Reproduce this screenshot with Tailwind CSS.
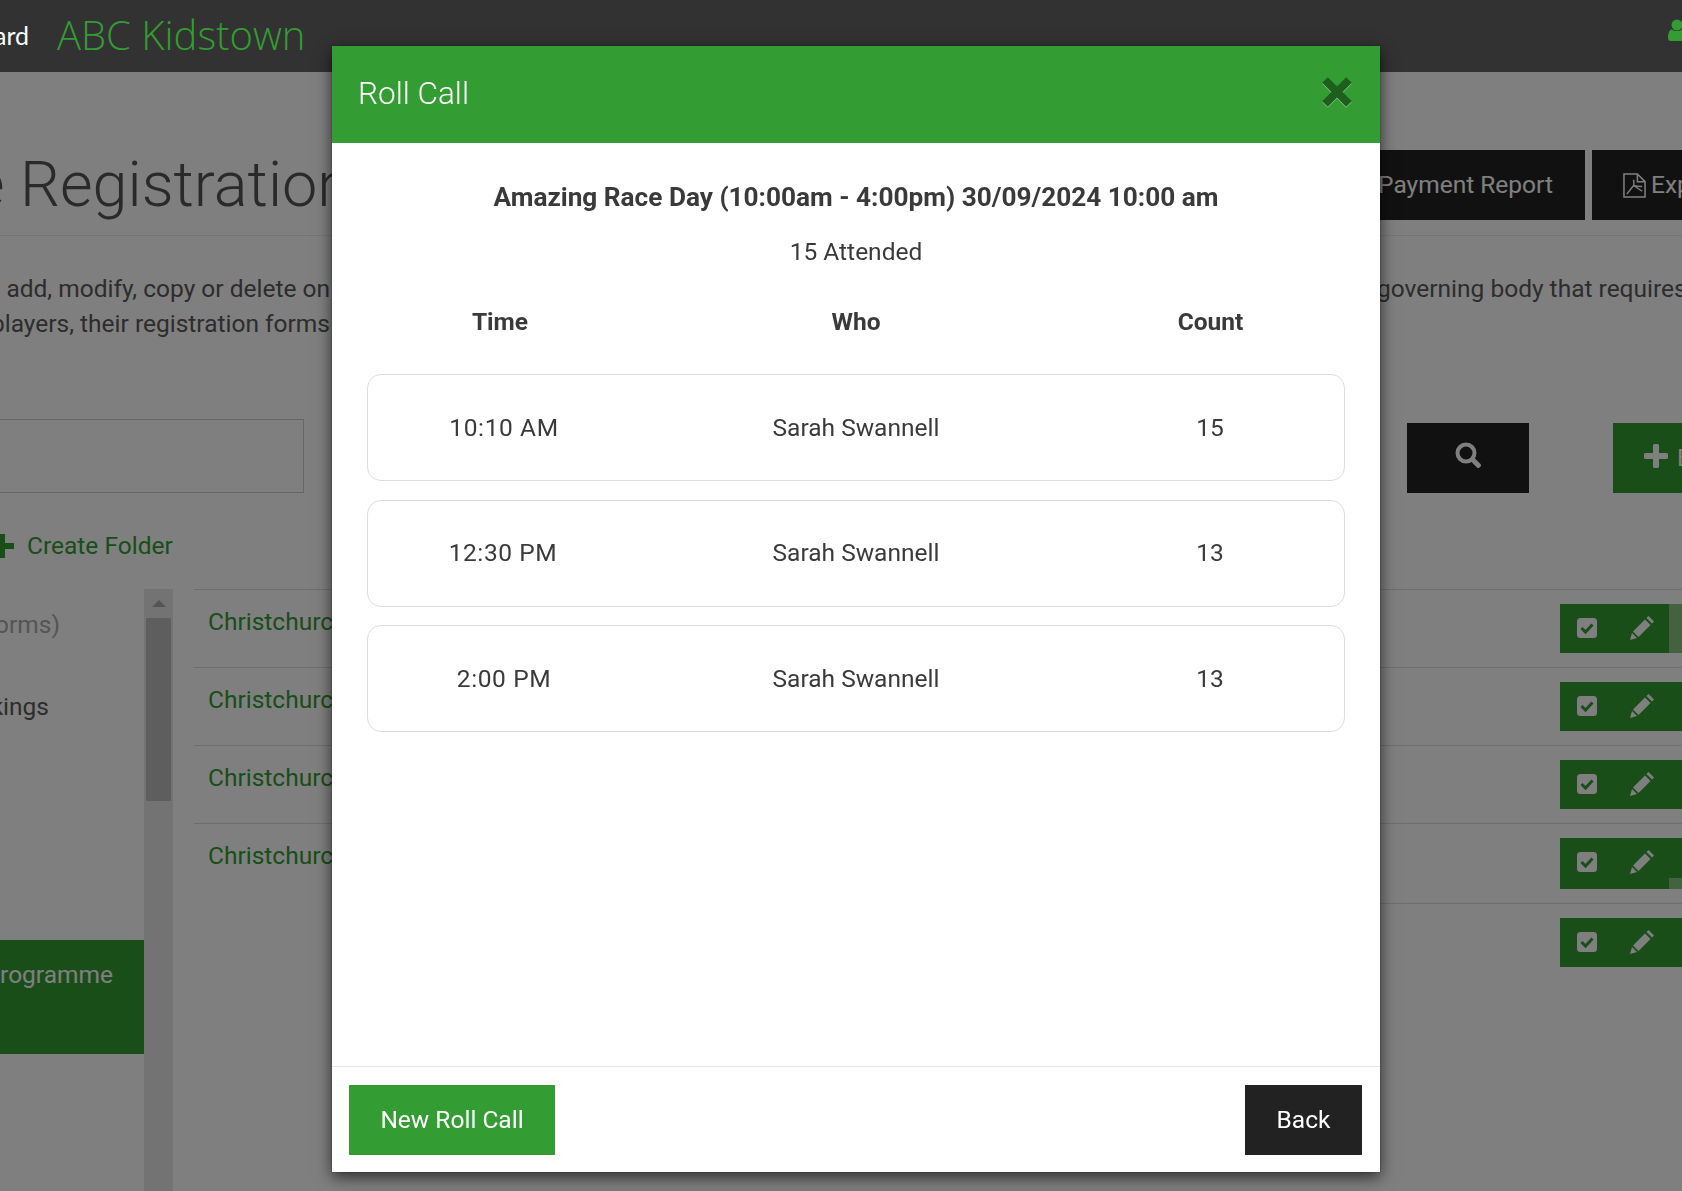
<!DOCTYPE html>
<html lang="en">
<head>
    <meta charset="UTF-8">
    <title>Roll Call - ABC Kidstown</title>
    <script src="https://cdn.jsdelivr.net/npm/@tailwindcss/browser@4"></script>
</head>
<body class="bg-white font-['Roboto',sans-serif] text-[24.5px] text-[#5a5a5a]">

<div class="w-[1682px] h-[1191px] overflow-hidden">
    <!-- top bar stays above the backdrop -->
    <header class="relative z-20 h-[72px] bg-[#323232] flex items-center justify-between">
        <div class="flex items-center">
            <div class="w-[29px] flex justify-end">
                <span class="shrink-0 text-white text-[25px] font-['Lato',sans-serif]">Dashboard</span>
            </div>
            <a href="#" class="ml-[28px] -mt-[2px] text-[#339c33] text-[40px] font-light font-['Open_Sans',sans-serif]">ABC Kidstown</a>
        </div>
        <svg class="w-[22px] h-[22px] shrink-0 -mt-[12px] mr-[-8px] text-[#339c33]" viewBox="0 0 22 22" fill="currentColor"><circle cx="9" cy="6" r="5.5"/><path d="M0 19c0-6 2-8.500 4-8.500 1.500 1 3 1.500 5 1.500s3.500-.5 5-1.500c2 0 4 2.500 4 8.500 0 2-1 3-3 3H3c-2 0-3-1-3-3z"/></svg>
    </header>

    <!-- page title -->
    <div class="h-[164px] border-b border-[#e8e8e8] flex items-start">
        <div class="w-[352px] flex justify-end shrink-0 mt-[73px]">
            <h1 class="shrink-0 text-[63px] font-light leading-[80px] text-[#555]">Programme Registration</h1>
        </div>
        <div class="ml-[928px] mt-[78px] w-[305px] h-[70px] pt-[1px] bg-[#222] text-white flex items-center justify-end pr-[32px] shrink-0">Payment Report</div>
        <div class="ml-[7px] mt-[78px] w-[200px] h-[70px] bg-[#222] text-white flex items-center pl-[31px] shrink-0">
            <svg class="w-[23px] h-[25px] mr-[5px] shrink-0" viewBox="0 0 24 26" fill="none" stroke="currentColor" stroke-width="1.600"><path d="M1 1h14l8 8v16H1z"/><path d="M15 1v8h8"/><path d="M4 22l7-9c1-2 0-4 0-6M11 13l9 6M11 13c3 1 6 1 9 1" stroke-width="1.500"/></svg>
            Export
        </div>
    </div>

    <!-- intro text -->
    <div class="mt-[35px] flex h-[35px] leading-[35px] justify-between">
        <div class="w-[330px] flex justify-end shrink-0"><span class="shrink-0">Use this page to add, modify, copy or delete on</span></div>
        <span class="shrink-0 ml-[1047px]">governing body that requires</span>
    </div>
    <div class="flex h-[35px] leading-[35px]">
        <div class="w-[330px] flex justify-end shrink-0"><span class="shrink-0">players, their registration forms</span></div>
    </div>

    <!-- search row -->
    <div class="mt-[78px] flex items-end">
        <div class="-ml-[20px] w-[324px] h-[74px] border border-[#ccc] shrink-0"></div>
        <div class="ml-[1103px] w-[122px] h-[70px] bg-[#222] text-white flex items-center justify-center shrink-0">
            <svg class="w-[26px] h-[26px] -mt-[6px]" viewBox="0 0 26 26" fill="none" stroke="currentColor"><circle cx="11" cy="11" r="8.500" stroke-width="4"/><path d="M17 17l8 8" stroke-width="5"/></svg>
        </div>
        <div class="ml-[84px] w-[200px] h-[70px] bg-[#339c33] text-white flex items-center pl-[31px] shrink-0">
            <svg class="w-[24px] h-[24px] mr-[9px] -mt-[4px] shrink-0" viewBox="0 0 24 24" fill="currentColor"><path d="M9 1.500c0-.8.700-1.500 1.500-1.500h3c.8 0 1.500.7 1.500 1.500V9h7.500c.8 0 1.500.7 1.500 1.500v3c0 .8-.7 1.500-1.500 1.500H15v7.500c0 .8-.7 1.500-1.500 1.500h-3c-.8 0-1.500-.7-1.500-1.500V15H1.500C.7 15 0 14.300 0 13.500v-3C0 9.700.7 9 1.500 9H9z"/></svg>
            Enrol
        </div>
    </div>

    <!-- create folder -->
    <div class="mt-[38px] h-[30px] flex items-center text-[#339c33]">
        <svg class="w-[14px] h-[24px] shrink-0" viewBox="10 0 14 24" fill="currentColor"><path d="M9 0h6v9h9v6h-9v9H9v-9H0V9h9z"/></svg>
        <span class="ml-[13px]">Create Folder</span>
    </div>

    <div class="mt-[28px] flex h-[602px]">
        <!-- folder list -->
        <div class="w-[144px] shrink-0 relative">
            <div class="mt-[20px] w-[60px] flex justify-end leading-[32px] text-[#aaa]"><span class="shrink-0">Programmes (No forms)</span></div>
            <div class="mt-[50px] w-[49px] flex justify-end leading-[32px]"><span class="shrink-0">Bookings</span></div>
            <div class="mt-[217px] h-[114px] bg-[#339c33] text-white flex justify-end pr-[31px] pt-[19px] leading-[32px]"><span class="shrink-0">Programme</span></div>
        </div>
        <!-- scrollbar -->
        <div class="w-[29px] shrink-0 bg-[#e6e6e6] flex flex-col items-center">
            <div class="h-[29px] flex items-center justify-center">
                <div class="w-0 h-0 border-x-[7px] border-x-transparent border-b-[7px] border-b-[#aaa]"></div>
            </div>
            <div class="w-[25px] h-[183px] bg-[#bdbdbd]"></div>
        </div>
        <!-- programme rows -->
        <div class="ml-[21px] flex-1 text-[#339c33]">
            <div class="h-[78px] border-t border-[#ddd] flex pl-[14px]">
                <span class="pt-[16px] leading-[32px]">Christchurch Programme</span>
                <div class="ml-auto mt-[14px] w-[122px] h-[49px] bg-[#339c33] text-white flex">
                    <svg class="ml-[17px] mt-[14px] w-[20px] h-[20px] shrink-0" viewBox="0 0 20 20"><rect width="20" height="20" rx="3.500" fill="currentColor"/><path d="M4.500 10l4 4 7-7.500" fill="none" stroke="#339c33" stroke-width="3"/></svg>
                    <svg class="ml-[33px] mt-[12px] w-[24px] h-[24px] shrink-0" viewBox="0 0 24 24" fill="currentColor"><path d="M0 24l2-7 5 5z"/><path d="M3 15.500l12-12 5.500 5.500-12 12z"/><path d="M16.500 2l2-2L24 5.500l-2 2z"/></svg>
                    <div class="ml-auto w-[13px] bg-[#88c480]"></div>
                </div>
            </div>
            <div class="h-[78px] border-t border-[#ddd] flex pl-[14px]">
                <span class="pt-[16px] leading-[32px]">Christchurch Programme</span>
                <div class="ml-auto mt-[14px] w-[122px] h-[49px] bg-[#339c33] text-white flex">
                    <svg class="ml-[17px] mt-[14px] w-[20px] h-[20px] shrink-0" viewBox="0 0 20 20"><rect width="20" height="20" rx="3.500" fill="currentColor"/><path d="M4.500 10l4 4 7-7.500" fill="none" stroke="#339c33" stroke-width="3"/></svg>
                    <svg class="ml-[33px] mt-[12px] w-[24px] h-[24px] shrink-0" viewBox="0 0 24 24" fill="currentColor"><path d="M0 24l2-7 5 5z"/><path d="M3 15.500l12-12 5.500 5.500-12 12z"/><path d="M16.500 2l2-2L24 5.500l-2 2z"/></svg>
                </div>
            </div>
            <div class="h-[78px] border-t border-[#ddd] flex pl-[14px]">
                <span class="pt-[16px] leading-[32px]">Christchurch Programme</span>
                <div class="ml-auto mt-[14px] w-[122px] h-[49px] bg-[#339c33] text-white flex">
                    <svg class="ml-[17px] mt-[14px] w-[20px] h-[20px] shrink-0" viewBox="0 0 20 20"><rect width="20" height="20" rx="3.500" fill="currentColor"/><path d="M4.500 10l4 4 7-7.500" fill="none" stroke="#339c33" stroke-width="3"/></svg>
                    <svg class="ml-[33px] mt-[12px] w-[24px] h-[24px] shrink-0" viewBox="0 0 24 24" fill="currentColor"><path d="M0 24l2-7 5 5z"/><path d="M3 15.500l12-12 5.500 5.500-12 12z"/><path d="M16.500 2l2-2L24 5.500l-2 2z"/></svg>
                </div>
            </div>
            <div class="h-[80px] border-t border-[#ddd] flex pl-[14px]">
                <span class="pt-[16px] leading-[32px]">Christchurch Programme</span>
                <div class="ml-auto mt-[14px] w-[122px] h-[51px] bg-[#339c33] text-white flex">
                    <svg class="ml-[17px] mt-[14px] w-[20px] h-[20px] shrink-0" viewBox="0 0 20 20"><rect width="20" height="20" rx="3.500" fill="currentColor"/><path d="M4.500 10l4 4 7-7.500" fill="none" stroke="#339c33" stroke-width="3"/></svg>
                    <svg class="ml-[33px] mt-[12px] w-[24px] h-[24px] shrink-0" viewBox="0 0 24 24" fill="currentColor"><path d="M0 24l2-7 5 5z"/><path d="M3 15.500l12-12 5.500 5.500-12 12z"/><path d="M16.500 2l2-2L24 5.500l-2 2z"/></svg>
                    <div class="ml-auto self-end w-[13px] h-[11px] bg-[#88c480]"></div>
                </div>
            </div>
            <div class="ml-auto w-[302px] h-[78px] border-t border-[#ddd] flex justify-end">
                <div class="mt-[14px] w-[122px] h-[49px] bg-[#339c33] text-white flex">
                    <svg class="ml-[17px] mt-[14px] w-[20px] h-[20px] shrink-0" viewBox="0 0 20 20"><rect width="20" height="20" rx="3.500" fill="currentColor"/><path d="M4.500 10l4 4 7-7.500" fill="none" stroke="#339c33" stroke-width="3"/></svg>
                    <svg class="ml-[33px] mt-[12px] w-[24px] h-[24px] shrink-0" viewBox="0 0 24 24" fill="currentColor"><path d="M0 24l2-7 5 5z"/><path d="M3 15.500l12-12 5.500 5.500-12 12z"/><path d="M16.500 2l2-2L24 5.500l-2 2z"/></svg>
                </div>
            </div>
        </div>
    </div>
</div>

<!-- backdrop -->
<div class="fixed inset-0 z-10 bg-black/50"></div>

<!-- roll call modal -->
<div class="fixed inset-0 z-30">
    <div class="ml-[332px] mt-[46px] w-[1048px] h-[1126px] bg-white flex flex-col text-[#3a3a3a] shadow-[0_5px_15px_rgba(0,0,0,0.65),0_0_1px_rgba(0,0,0,0.6)]">
        <div class="h-[97px] shrink-0 bg-[#339c33] flex items-center justify-between pl-[26px] pr-[28px]">
            <h2 class="-mt-[1px] text-white text-[31.5px] font-light">Roll Call</h2>
            <svg class="w-[30px] h-[30px] -mt-[6px] drop-shadow-[0_1px_0_rgba(255,255,255,0.4)]" viewBox="0 0 30 30"><path d="M3 3l24 24M27 3L3 27" fill="none" stroke="#1e5f1e" stroke-width="8"/></svg>
        </div>
        <div class="flex-1 px-[35px]">
            <h3 class="mt-[37px] text-center font-bold text-[26.2px] leading-[34px]">Amazing Race Day (10:00am - 4:00pm) 30/09/2024 10:00 am</h3>
            <p class="mt-[22px] text-center leading-[32px]">15 Attended</p>
            <div class="mt-[37px] grid grid-cols-[272px_1fr_270px] text-center font-bold leading-[34px]">
                <div class="pr-[6px]">Time</div>
                <div class="pr-[2px]">Who</div>
                <div class="pl-[1px]">Count</div>
            </div>
            <div class="mt-[35px] flex flex-col gap-[18.5px]">
                <div class="h-[107px] pt-[1px] rounded-[14px] border border-[#ddd] grid grid-cols-[272px_1fr_270px] items-center text-center">
                    <div class="tracking-[0.6px]">10:10 AM</div>
                    <div class="pr-[2px]">Sarah Swannell</div>
                    <div class="pl-[2px]">15</div>
                </div>
                <div class="h-[107px] pt-[1px] rounded-[14px] border border-[#ddd] grid grid-cols-[272px_1fr_270px] items-center text-center">
                    <div class="tracking-[0.6px] pr-[2px]">12:30 PM</div>
                    <div class="pr-[2px]">Sarah Swannell</div>
                    <div class="pl-[2px]">13</div>
                </div>
                <div class="h-[107px] pt-[1px] rounded-[14px] border border-[#ddd] grid grid-cols-[272px_1fr_270px] items-center text-center">
                    <div class="tracking-[0.6px]">2:00 PM</div>
                    <div class="pr-[2px]">Sarah Swannell</div>
                    <div class="pl-[2px]">13</div>
                </div>
            </div>
        </div>
        <div class="h-[106px] shrink-0 border-t border-[#e5e5e5] flex justify-between pt-[18px] pl-[17px] pr-[18px]">
            <button class="w-[206px] h-[70px] bg-[#339c33] text-white">New Roll Call</button>
            <button class="w-[117px] h-[70px] bg-[#222] text-white">Back</button>
        </div>
    </div>
</div>

</body>
</html>
